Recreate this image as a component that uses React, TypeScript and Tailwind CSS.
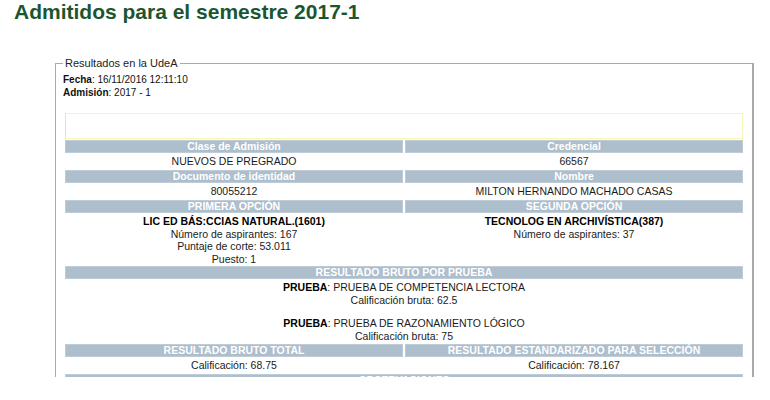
const headCell =
  'h-[13px] border border-[#bfccd7] bg-[#adbecc] text-center text-[10.5px] font-bold leading-[11px] text-white';
const dataCell = 'text-center text-[10.5px] leading-[13px] text-[#1a1a1a]';

function Head({ children, wide }: { children: React.ReactNode; wide?: boolean }) {
  return <div className={`${headCell} ${wide ? 'col-span-2' : ''}`}>{children}</div>;
}

function Prueba({ name, score }: { name: string; score: string }) {
  return (
    <div>
      <div>
        <span className="font-bold text-black">PRUEBA</span>: {name}
      </div>
      <div>Calificación bruta: {score}</div>
    </div>
  );
}

export default function App() {
  return (
    <div
      className="h-[377px] w-[770px] overflow-hidden bg-white"
      style={{ fontFamily: '"Liberation Sans", Arial, sans-serif' }}
    >
      <h1 className="pl-[14px] text-[21px] font-bold leading-[24px] text-[#1b5631]">
        Admitidos para el semestre 2017-1
      </h1>

      <fieldset className="mt-[32px] ml-[55px] w-[699px] border border-r-2 border-[#a9a9a9] pl-[7px] pb-4">
        <legend className="px-[2px] text-[11px] leading-[14px] text-[#222]">
          Resultados en la UdeA
        </legend>

        <div className="mt-[3px] text-[10px] leading-[13px] text-[#111]">
          <div>
            <span className="font-bold">Fecha</span>: 16/11/2016 12:11:10
          </div>
          <div>
            <span className="font-bold">Admisión</span>: 2017 - 1
          </div>
        </div>

        <div className="mt-[14px] ml-[2px] h-[26px] w-[678px] border border-[#f6f6b4] border-l-[#eeee80]" />

        <div className="mt-[1px] ml-[2px] grid w-[678px] grid-cols-[338px_338px] gap-[2px]">
          <Head>Clase de Admisión</Head>
          <Head>Credencial</Head>
          <div className={`${dataCell} h-[13px]`}>NUEVOS DE PREGRADO</div>
          <div className={`${dataCell} h-[13px]`}>66567</div>

          <Head>Documento de identidad</Head>
          <Head>Nombre</Head>
          <div className={`${dataCell} h-[13px]`}>80055212</div>
          <div className={`${dataCell} h-[13px]`}>MILTON HERNANDO MACHADO CASAS</div>

          <Head>PRIMERA OPCIÓN</Head>
          <Head>SEGUNDA OPCIÓN</Head>
          <div className={`${dataCell} h-[49px] !leading-[12.6px]`}>
            <div className="font-bold text-black">LIC ED BÁS:CCIAS NATURAL.(1601)</div>
            <div>Número de aspirantes: 167</div>
            <div>Puntaje de corte: 53.011</div>
            <div>Puesto: 1</div>
          </div>
          <div className={`${dataCell} h-[49px] !leading-[12.6px]`}>
            <div className="font-bold text-black">TECNOLOG EN ARCHIVÍSTICA(387)</div>
            <div>Número de aspirantes: 37</div>
          </div>

          <Head wide>RESULTADO BRUTO POR PRUEBA</Head>
          <div className={`${dataCell} col-span-2 h-[61px]`}>
            <Prueba name="PRUEBA DE COMPETENCIA LECTORA" score="62.5" />
            <div className="mt-[10px]">
              <Prueba name="PRUEBA DE RAZONAMIENTO LÓGICO" score="75" />
            </div>
          </div>

          <Head>RESULTADO BRUTO TOTAL</Head>
          <Head>RESULTADO ESTANDARIZADO PARA SELECCIÓN</Head>
          <div className={`${dataCell} h-[13px]`}>Calificación: 68.75</div>
          <div className={`${dataCell} h-[13px]`}>Calificación: 78.167</div>

          <Head wide>OBSERVACIONES</Head>
        </div>
      </fieldset>
    </div>
  );
}
